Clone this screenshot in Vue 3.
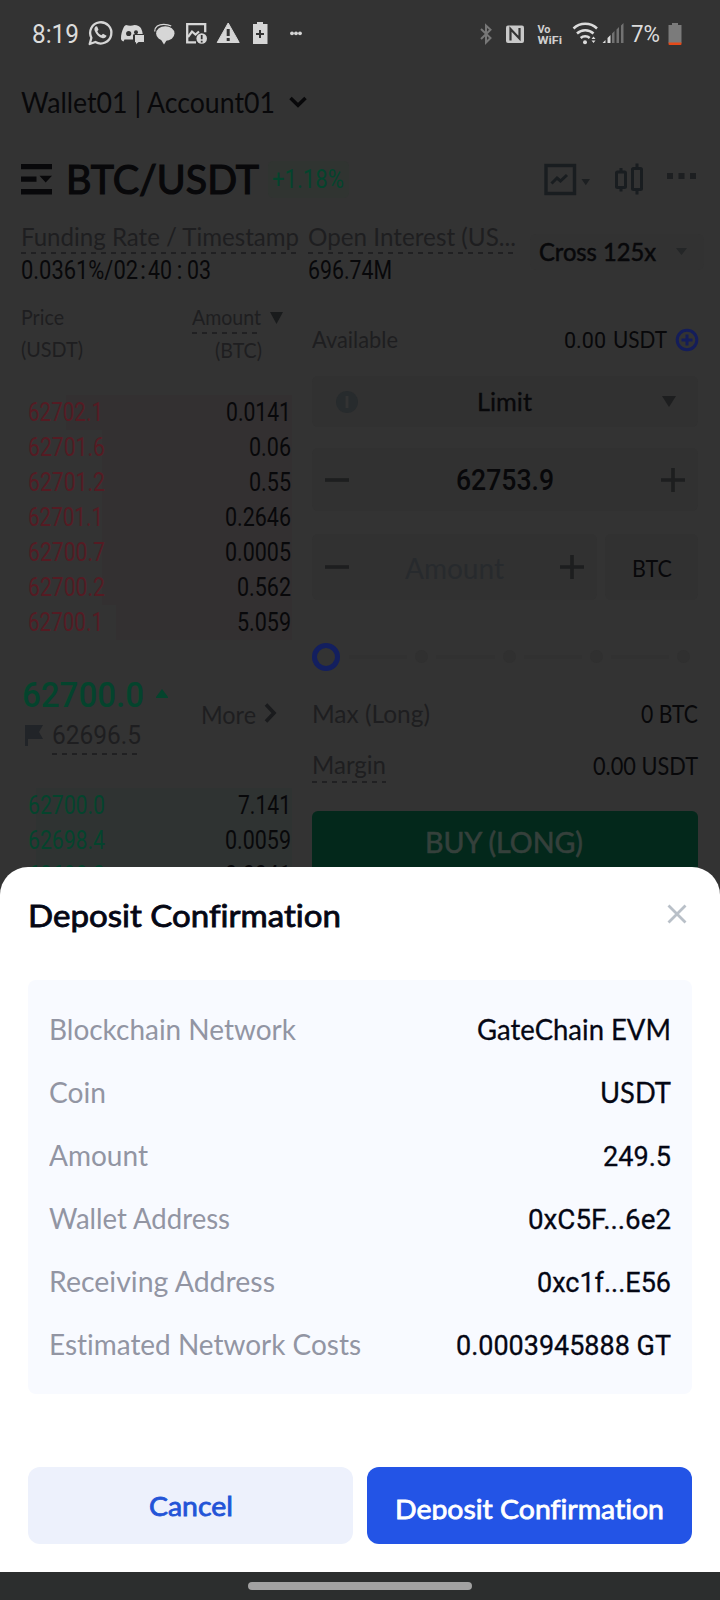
<script setup>
const asks = [
  { price: '62702.1', amount: '0.0141', pw: 75, aw: 65, depth: 226 },
  { price: '62701.6', amount: '0.06', pw: 77, aw: 42, depth: 190 },
  { price: '62701.2', amount: '0.55', pw: 77, aw: 42, depth: 190 },
  { price: '62701.1', amount: '0.2646', pw: 75, aw: 66, depth: 190 },
  { price: '62700.7', amount: '0.0005', pw: 77, aw: 66, depth: 190 },
  { price: '62700.2', amount: '0.562', pw: 77, aw: 54, depth: 190 },
  { price: '62700.1', amount: '5.059', pw: 75, aw: 54, depth: 176 },
]
const bids = [
  { price: '62700.0', amount: '7.141', pw: 77, aw: 53, depth: 256 },
  { price: '62698.4', amount: '0.0059', pw: 77, aw: 66, depth: 256 },
  { price: '62698.3', amount: '0.0041', pw: 77, aw: 66, depth: 256 },
]
const details = [
  { label: 'Blockchain Network', value: 'GateChain EVM', lw: 247, vw: 194 },
  { label: 'Coin', value: 'USDT', lw: 57, vw: 71 },
  { label: 'Amount', value: '249.5', lw: 99, vw: 68, num: true },
  { label: 'Wallet Address', value: '0xC5F...6e2', lw: 181, vw: 143, num: true },
  { label: 'Receiving Address', value: '0xc1f...E56', lw: 226, vw: 134, num: true },
  { label: 'Estimated Network Costs', value: '0.0003945888 GT', lw: 312, vw: 215, num: true },
]

// Condenses or widens a text run so that it occupies the given width in the layout.
const vFit = {
  mounted(el, { value }) {
    const natural = el.getBoundingClientRect().width
    el.style.transform = `scaleX(${value / natural})`
    el.style.marginRight = `${value - natural}px`
  },
}
</script>

<template>
  <div class="screen">
    <div class="status">
      <span v-fit="47" class="clock num">8:19</span>
      <svg class="left-icons" viewBox="86 16 220 36" width="220" height="36">
        <path d="M89.700 44l1.700-6.200a10.600 10.600 0 1 1 4 4.200z" fill="none" stroke="#d6d6d6" stroke-width="2.300" stroke-linejoin="round" />
        <path fill="#d6d6d6" d="M96 26.300c-1.500 1-2 2.600-1.300 4.500 1.300 3.700 4.300 6.500 8 7.400 1.800.4 3.300-.6 3.900-2.400l-3.600-2-1.600 1.500c-2-.8-3.300-2.200-4.100-4l1.200-1.600-1.300-3.300z" />
        <path fill="#d6d6d6" d="M126 25c3 1 5.500 1 8.500 0 3 .2 5.500 1.200 6.500 3.300 1 2 1.600 4.200 1.800 6.200H133v5h-8.500l-1 2c-1.500-.6-2.600-1.500-2.500-3 0-4 .9-7.300 2.400-10.500.6-1.700 1.600-2.500 2.600-3z" />
        <circle cx="128.700" cy="33.500" r="2.600" fill="#333" /><circle cx="136" cy="32.300" r="2" fill="#333" />
        <path fill="#d6d6d6" stroke="#333" d="M134.500 34.500h10v8h-6l-3 2.500v-2.500h-1z" />
        <ellipse cx="165.300" cy="33.500" rx="9.200" ry="7.300" fill="#d6d6d6" />
        <path d="M160 38h8l-4 6.500z" fill="#d6d6d6" />
        <path d="M154.700 31.500c0-4.700 4-7.200 9-7.200 3 0 5.500.5 7.500 1.700" fill="none" stroke="#d6d6d6" stroke-width="1.300" />
        <path d="M196 42.300h-8.800V24.200h18v8" fill="none" stroke="#d6d6d6" stroke-width="2.300" />
        <path d="M188 37l4-5.500 3.500 3 3.500-3" fill="none" stroke="#d6d6d6" stroke-width="2.200" />
        <circle cx="201.700" cy="38.500" r="5.300" fill="#d6d6d6" />
        <path d="M201.700 35v4.200m0 1.500v1.800" stroke="#333" stroke-width="1.800" />
        <path d="M228.200 23l11 19.500h-22z" fill="#d6d6d6" stroke="#d6d6d6" stroke-linejoin="round" />
        <path d="M228.200 29v7m0 2v3" stroke="#333" stroke-width="3" />
        <path d="M257 22h6v2h4.500v20H253V24h4z" fill="#d6d6d6" />
        <path d="M260 30v8m-4-4h8" stroke="#333" stroke-width="2" />
        <g fill="#d6d6d6"><circle cx="292" cy="33.300" r="1.900" /><circle cx="296" cy="33.300" r="1.900" /><circle cx="300" cy="33.300" r="1.900" /></g>
      </svg>
      <svg class="right-icons" viewBox="476 16 150 36" width="150" height="36">
        <path d="M481 29l9.500 9-4.500 4.500v-17l4.500 4.200-9.500 9.300" fill="none" stroke="#777" stroke-width="2" />
        <rect x="506" y="25.500" width="18" height="17.500" rx="2" fill="#c9c9c9" />
        <path d="M510.500 40.500V29l9 9.500V28" fill="none" stroke="#333" stroke-width="2.200" />
        <g class="vowifi"><text x="537.500" y="33.300" textLength="13" lengthAdjust="spacingAndGlyphs">Vo</text><text x="537.500" y="43.500" textLength="24.500" lengthAdjust="spacingAndGlyphs">WiFi</text></g>
        <g fill="none" stroke="#dcdcdc" stroke-width="2.500">
          <path d="M573.500 28.500a17 17 0 0 1 23.500 0" /><path d="M577 33.500a12 12 0 0 1 16.500 0" /><path d="M580.700 38a6.500 6.500 0 0 1 9 0" />
        </g>
        <circle cx="585" cy="42.300" r="2" fill="#dcdcdc" />
        <path d="M591.500 39l2-2.500 2 2.500zM591.500 40.500l2 2.500 2-2.500z" fill="#dcdcdc" />
        <g fill="#dcdcdc"><path d="M602.500 43l3-3v3zM607.500 38l3-3v8h-3z" /></g>
        <path d="M612 33.500l2.500-2.500v12H612zM616.500 29.500l2.500-2.500v16h-2.500zM621 25.500l2.500-2.500v20H621z" fill="#727272" />
      </svg>
      <span v-fit="29" class="percent num">7%</span>
      <svg class="battery" viewBox="0 0 14 22" width="14" height="22">
        <path d="M4 0h6v2h3.500v18H.5V2H4z" fill="#7b7b7b" /><path d="M.5 19.500h13V21a1 1 0 0 1-1 1h-11a1 1 0 0 1-1-1z" fill="#e64a19" />
      </svg>
    </div>

    <div class="wallet">
      <span v-fit="254">Wallet01 | Account01</span>
      <svg width="18" height="12" viewBox="0 0 18 12"><path d="M1.500 2L9 9.300 16.500 2" fill="none" stroke="#08080a" stroke-width="3.500" /></svg>
    </div>

    <div class="pair">
      <svg width="31" height="31" viewBox="0 0 31 31" fill="#08080a"><path d="M0 0h31v5.300H0zM0 12.500h15.500v5.300H0zM0 25h31v5.500H0zM18.500 11.800H31L24.700 18.500z" /></svg>
      <span v-fit="193" class="pair-name">BTC/USDT</span>
      <span class="change num"><span v-fit="72">+1.18%</span></span>
      <svg class="tools" viewBox="544 160 154 36" width="154" height="36">
        <rect x="546" y="164.500" width="28.500" height="28" fill="none" stroke="#191d20" stroke-width="3.400" />
        <path d="M551.500 182.500l5.500-5.500 3.500 3 6.500-6" fill="none" stroke="#191d20" stroke-width="3" />
        <path d="M581.500 178h8.500l-4.200 6.300z" fill="#1c1f21" />
        <g fill="none" stroke="#191d20" stroke-width="3">
          <rect x="616.500" y="171" width="9" height="15.500" rx="1" /><rect x="632.500" y="167.500" width="9" height="21" rx="1" />
          <path d="M621 167v4m0 15.500v4m16-28v5m0 21v5" />
        </g>
        <path d="M667 172h6v6h-6zM678.500 172h6v6h-6zM690 172h6v6h-6z" fill="#1d1f21" />
      </svg>
    </div>

    <div class="info">
      <div class="stat funding">
        <div class="stat-label dashed"><span v-fit="278">Funding Rate / Timestamp</span></div>
        <div class="stat-value num"><span v-fit="117">0.0361%/02</span><i>:</i><span v-fit="24">40</span><i>:</i><span v-fit="24">03</span></div>
      </div>
      <div class="stat interest">
        <div class="stat-label dashed"><span v-fit="208">Open Interest (US...</span></div>
        <div class="stat-value num"><span v-fit="84">696.74M</span></div>
      </div>
      <div class="leverage"><span v-fit="117">Cross 125x</span><svg width="11" height="8" viewBox="0 0 11 8"><path d="M0 0h11L5.500 7z" fill="#242627" /></svg></div>
    </div>

    <div class="trade">
      <section class="book">
        <div class="heads">
          <div><div><span v-fit="43">Price</span></div><div><span v-fit="62">(USDT)</span></div></div>
          <div class="head-amount">
            <div class="sort"><span class="dashed"><span v-fit="69">Amount</span></span><svg width="13" height="12" viewBox="0 0 13 12"><path d="M0 0h13L6.500 12z" fill="#191b1c" /></svg></div>
            <div class="unit"><span v-fit="47">(BTC)</span></div>
          </div>
        </div>
        <div class="rows asks">
          <div v-for="row in asks" :key="row.price" class="row num">
            <span class="depth" :style="{ width: row.depth + 'px' }"></span>
            <span v-fit="row.pw" class="price">{{ row.price }}</span><span v-fit="row.aw">{{ row.amount }}</span>
          </div>
        </div>
        <div class="mid">
          <div>
            <div class="last num"><span v-fit="122">62700.0</span><svg width="12" height="9" viewBox="0 0 12 9"><path d="M6 0l6 8v1H0V8z" fill="#04442d" /></svg></div>
            <div class="index num"><svg width="18" height="21" viewBox="0 0 18 21"><path d="M0 0h18l-4 7 4 7H3v7H0z" fill="#212428" /></svg><span class="dashed"><span v-fit="89">62696.5</span></span></div>
          </div>
          <div class="more"><span v-fit="55">More</span><svg width="13" height="20" viewBox="0 0 13 20"><path d="M2 1.500L10 10 2 18.500" fill="none" stroke="#1a1b1d" stroke-width="3.600" /></svg></div>
        </div>
        <div class="rows bids">
          <div v-for="row in bids" :key="row.price" class="row num">
            <span class="depth" :style="{ width: row.depth + 'px' }"></span>
            <span v-fit="row.pw" class="price">{{ row.price }}</span><span v-fit="row.aw">{{ row.amount }}</span>
          </div>
        </div>
      </section>

      <section class="order">
        <div class="available">
          <span v-fit="86" class="muted">Available</span>
          <span class="balance"><span v-fit="42" class="num">0.00</span><span v-fit="54">USDT</span>
            <svg width="24" height="24" viewBox="0 0 24 24"><circle cx="12" cy="12" r="9.800" fill="none" stroke="#141d5a" stroke-width="3" /><path d="M12 6.500v11M6.500 12h11" stroke="#141d5a" stroke-width="3" /></svg>
          </span>
        </div>
        <div class="field type">
          <svg width="22" height="22" viewBox="0 0 22 22"><circle cx="11" cy="11" r="11" fill="#272b2d" /><path d="M11 5v12" stroke="#333" stroke-width="3" /></svg>
          <span v-fit="55">Limit</span>
          <svg width="14" height="11" viewBox="0 0 14 11"><path d="M0 0h14L7 11z" fill="#1d1e1f" /></svg>
        </div>
        <div class="field value">
          <svg width="24" height="24" viewBox="0 0 24 24"><path d="M0 12h24" /></svg>
          <span v-fit="98" class="num">62753.9</span>
          <svg width="24" height="24" viewBox="0 0 24 24"><path d="M0 12h24M12 0v24" /></svg>
        </div>
        <div class="amount-row">
          <div class="field amount">
            <svg width="24" height="24" viewBox="0 0 24 24"><path d="M0 12h24" /></svg>
            <span v-fit="99" class="placeholder">Amount</span>
            <svg width="24" height="24" viewBox="0 0 24 24"><path d="M0 12h24M12 0v24" /></svg>
          </div>
          <div class="field unit-box"><span v-fit="40">BTC</span></div>
        </div>
        <div class="slider"><span class="thumb"></span><template v-for="n in 4" :key="n"><span class="track"></span><span class="stop"></span></template></div>
        <div class="line max"><span v-fit="118" class="muted">Max (Long)</span><span v-fit="57">0 BTC</span></div>
        <div class="line margin"><span class="dashed muted"><span v-fit="74">Margin</span></span><span v-fit="105">0.00 USDT</span></div>
        <div class="buy"><span v-fit="158">BUY (LONG)</span></div>
      </section>
    </div>

    <div class="sheet">
      <div class="sheet-head">
        <span v-fit="313">Deposit Confirmation</span>
        <svg width="20" height="20" viewBox="0 0 20 20"><path d="M1.500 1.500l17 17M18.500 1.500l-17 17" fill="none" stroke="#b9c0c8" stroke-width="2.800" /></svg>
      </div>
      <div class="card">
        <div v-for="d in details" :key="d.label" class="detail">
          <span v-fit="d.lw" class="label">{{ d.label }}</span>
          <span v-fit="d.vw" class="amount-text" :class="{ num: d.num }">{{ d.value }}</span>
        </div>
      </div>
      <div class="actions">
        <button class="cancel"><span v-fit="84">Cancel</span></button>
        <button class="confirm"><span class="clip"><span v-fit="269">Deposit Confirmation</span></span></button>
      </div>
      <div class="gesture"><span></span></div>
    </div>
  </div>
</template>

<style>
html, body { margin: 0; background: #333; }
</style>

<style scoped>
.screen { position: relative; width: 720px; height: 1600px; overflow: hidden; background: #333; color: #08080a; font-family: Lato, "Liberation Sans", sans-serif; font-size: 24px; line-height: 1; font-variant-ligatures: none; }
.screen * { box-sizing: border-box; }
.screen span { white-space: nowrap; }
span { display: inline-block; flex: none; transform-origin: 0 50%; }
svg { flex: none; display: block; }
.num { font-family: Roboto, "Liberation Sans", sans-serif; }
.muted { color: #1e1e20; }
.dashed { background: repeating-linear-gradient(90deg, #202022 0 5px, transparent 5px 10px) 0 100% / 100% 2px no-repeat; }

.status { height: 68px; display: flex; align-items: center; padding: 0 38px 0 32px; color: #dcdcdc; }
.clock { font-size: 25px; }
.left-icons { margin-left: 7px; }
.right-icons { margin-left: auto; }
.percent { margin-left: 5px; font-size: 24px; }
.battery { margin-left: 8px; }
.vowifi { font: 700 11px Roboto, sans-serif; fill: #d0d0d0; }

.wallet { height: 68px; display: flex; align-items: center; gap: 14px; padding-left: 21px; font-size: 28px; }

.pair { height: 50px; margin-top: 18px; padding: 0 22px 0 21px; display: flex; align-items: center; }
.pair-name { margin-left: 14px; font-size: 40px; -webkit-text-stroke: 1.200px #08080a; }
.change { margin-left: 9px; height: 37px; width: 81px; padding-left: 4px; line-height: 37px; border-radius: 5px; background: #303431; color: #04442d; font-size: 25px; }
.tools { margin-left: auto; }

.info { margin-top: 16px; height: 66px; display: flex; padding-left: 21px; }
.funding { width: 287px; }
.interest { width: 222px; }
.stat-label { height: 34px; line-height: 33px; width: 278px; color: #1e1e20; font-size: 24.500px; }
.interest .stat-label { width: 207px; }
.stat-value { height: 32px; line-height: 33px; font-size: 25px; display: flex; }
.stat-value i { width: 10px; text-align: center; font-style: normal; }
.stat-value i:last-of-type { width: 15px; }
.leverage { width: 174px; height: 36px; margin-top: 14px; padding: 0 17px 0 9px; display: flex; align-items: center; justify-content: space-between; border-radius: 6px; background: #323232; font-size: 24.500px; -webkit-text-stroke: .5px #08080a; }

.trade { display: flex; gap: 20px; padding-left: 21px; }
.book { width: 271px; }
.heads { margin-top: 15px; height: 65px; display: flex; justify-content: space-between; color: #1e1e20; font-size: 20.500px; line-height: 32px; }
.head-amount { width: 100px; }
.sort { display: flex; gap: 9px; align-items: center; }
.sort .dashed { height: 33px; }
.unit { padding-left: 23px; }
.asks { margin-top: 29px; }
.row { position: relative; height: 35px; display: flex; align-items: center; justify-content: space-between; padding: 0 1px 0 7px; font-size: 25px; }
.row > span:not(.depth) { position: relative; }
.depth { position: absolute; right: 0; top: 0; bottom: 0; background: #333031; }
.bids .depth { background: #2f3332; }
.asks .price { color: #551b23; }
.bids .price { color: #04442d; }
.mid { height: 148px; padding-top: 35px; display: flex; justify-content: space-between; }
.last { height: 40px; display: flex; align-items: center; gap: 12px; padding-left: 1px; color: #04442d; font-size: 35px; font-weight: 500; }
.last svg { margin-bottom: 3px; }
.index { height: 40px; display: flex; align-items: center; padding-left: 4px; color: #1e1e20; font-size: 26px; }
.index .dashed { margin-left: 9px; height: 40px; line-height: 40px; }
.more { height: 40px; margin: 19px 15px 0 0; display: flex; align-items: center; gap: 8px; color: #1e1e20; font-size: 25px; }
.more svg { margin-bottom: 2px; }

.order { width: 386px; }
.available { margin-top: 30px; height: 48px; display: flex; align-items: center; justify-content: space-between; font-size: 22.500px; margin-right: -1px; }
.balance { display: flex; align-items: center; }
.balance span + span { margin-left: 7px; }
.balance svg { margin-left: 8px; }
.field { display: flex; align-items: center; justify-content: space-between; background: #313131; border-radius: 6px; }
.type { margin-top: 12px; height: 51px; padding: 0 22px 0 24px; font-size: 25px; }
.type span { margin-left: -12px; -webkit-text-stroke: .3px #08080a; }
.value, .amount { padding: 0 13px; stroke: #1d1e1f; stroke-width: 3.600; }
.field.value span, .field.amount span { stroke: none; }
.value { margin-top: 21px; height: 63px; font-size: 29px; font-weight: 500; }
.value span { padding-top: 1px; }
.amount-row { margin-top: 23px; display: flex; gap: 8px; height: 66px; }
.amount { width: 285px; font-size: 28px; }
.placeholder { color: #272a2d; padding-top: 1px; }
.unit-box { width: 93px; justify-content: center; padding-top: 2px; font-size: 23px; }
.slider { margin-top: 42px; height: 29px; display: flex; align-items: center; padding-right: 8px; }
.thumb { width: 28px; height: 28px; margin-right: -7px; border: 5px solid #131f5f; border-radius: 50%; }
.track { flex: 1; height: 4px; margin: 0 8px; background: #313131; }
.thumb + .track { margin-left: 16px; }
.stop { width: 13px; height: 13px; border-radius: 50%; background: #303030; }
.line { display: flex; justify-content: space-between; align-items: center; font-size: 25px; }
.max { margin-top: 22px; height: 40px; }
.margin { margin-top: 14px; height: 36px; }
.margin .dashed { height: 36px; line-height: 35px; }
.buy { margin-top: 28px; height: 65px; display: flex; align-items: center; justify-content: center; padding: 0 2px 3px 0; border-radius: 6px; background: #03281b; color: #35403b; font-size: 28px; -webkit-text-stroke: .6px #35403b; }

.sheet { position: absolute; left: 0; right: 0; top: 867px; bottom: 0; background: #fff; border-radius: 28px 28px 0 0; color: #050714; }
.sheet-head { height: 113px; padding: 15px 33px 32px 28px; display: flex; align-items: center; justify-content: space-between; font-size: 30px; -webkit-text-stroke: .8px #050714; }
.sheet-head svg { margin-bottom: 2px; }
.card { margin: 0 28px; height: 414px; padding: 18px 21px 0 21px; border-radius: 8px; background: #f8faff; font-size: 28.500px; }
.detail { height: 63px; display: flex; align-items: center; justify-content: space-between; }
.label { color: #9295a3; }
.amount-text { -webkit-text-stroke: .3px #050714; }
.detail .num { padding-top: 3px; }
.actions { margin: 73px 28px 28px; display: grid; grid-template-columns: 1fr 1fr; gap: 14px; height: 77px; }
button { display: flex; align-items: center; justify-content: center; padding: 0; border: 0; border-radius: 12px; font: 400 27.500px/1 Lato, sans-serif; font-variant-ligatures: none; -webkit-text-stroke: .8px currentColor; }
.cancel { background: #edf1fc; color: #2354d7; }
.confirm { background: #2354e6; color: #fff; }
.clip { height: 26px; overflow: hidden; line-height: 30px; margin-top: 3px; }
.gesture { height: 28px; background: #2c2e2e; display: flex; justify-content: center; padding-top: 10px; }
.gesture span { width: 224px; height: 8px; border-radius: 4px; background: #a2a2a2; }
</style>
